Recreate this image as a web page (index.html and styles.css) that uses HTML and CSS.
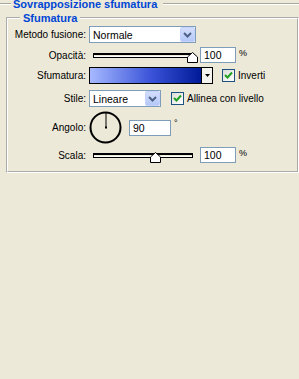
FILE: index.html
```html
<!DOCTYPE html>
<html lang="it">
<head>
  <meta charset="UTF-8">
  <title>Sovrapposizione sfumatura</title>
  <link rel="stylesheet" href="styles.css">
</head>
<body>

<!-- Section title -->
<div class="title-row">
  <span class="etch lead"></span>
  <span class="title">Sovrapposizione sfumatura</span>
  <span class="etch fill"></span>
</div>

<fieldset class="group">
  <legend>Sfumatura</legend>

  <!-- Blend mode -->
  <div class="row row-blend">
    <span class="lbl">Metodo fusione:</span>
    <div class="select sel-blend">
      <span class="sel-text">Normale</span>
      <span class="sel-btn">
        <svg width="9" height="6" viewBox="0 0 9 6"><path d="M1 1 L4.5 4.5 L8 1" fill="none" stroke="#4D6185" stroke-width="2"/></svg>
      </span>
    </div>
  </div>

  <!-- Opacity -->
  <div class="row row-opacity">
    <span class="lbl">Opacità:</span>
    <div class="slider">
      <div class="track"></div>
      <svg class="thumb thumb-end" width="11" height="11" viewBox="0 0 11 11"><path d="M0.5 10.5 V5 L5.5 0.5 L10.5 5 V10.5 Z" fill="#fff" stroke="#000"/></svg>
    </div>
    <div class="num">100</div>
    <span class="unit">%</span>
  </div>

  <!-- Gradient -->
  <div class="row row-grad">
    <span class="lbl">Sfumatura:</span>
    <div class="grad">
      <div class="grad-fill"></div>
      <div class="grad-btn">
        <svg width="5" height="3" viewBox="0 0 5 3"><path d="M0 0 H5 L2.5 3 Z" fill="#000"/></svg>
      </div>
    </div>
    <span class="check chk-invert">
      <svg width="9" height="9" viewBox="0 0 9 9"><path d="M1 4 L3.5 6.5 L8 1.5" fill="none" stroke="#21A121" stroke-width="2"/></svg>
    </span>
    <span class="chk-label">Inverti</span>
  </div>

  <!-- Style -->
  <div class="row row-style">
    <span class="lbl">Stile:</span>
    <div class="select sel-style">
      <span class="sel-text">Lineare</span>
      <span class="sel-btn">
        <svg width="9" height="6" viewBox="0 0 9 6"><path d="M1 1 L4.5 4.5 L8 1" fill="none" stroke="#4D6185" stroke-width="2"/></svg>
      </span>
    </div>
    <span class="check chk-align">
      <svg width="9" height="9" viewBox="0 0 9 9"><path d="M1 4 L3.5 6.5 L8 1.5" fill="none" stroke="#21A121" stroke-width="2"/></svg>
    </span>
    <span class="chk-label">Allinea con livello</span>
  </div>

  <!-- Angle -->
  <div class="row row-angle">
    <span class="lbl">Angolo:</span>
    <svg class="dial" width="33" height="33" viewBox="0 0 33 33">
      <circle cx="16.5" cy="16.5" r="15" fill="none" stroke="#000" stroke-width="2"/>
      <line x1="17" y1="16.5" x2="17" y2="2" stroke="#000" stroke-width="1"/>
      <rect x="16" y="15.5" width="2" height="2" fill="#000"/>
    </svg>
    <div class="num num-angle">90</div>
    <span class="deg">°</span>
  </div>

  <!-- Scale -->
  <div class="row row-scale">
    <span class="lbl">Scala:</span>
    <div class="slider">
      <div class="track"></div>
      <svg class="thumb thumb-mid" width="11" height="11" viewBox="0 0 11 11"><path d="M0.5 10.5 V5 L5.5 0.5 L10.5 5 V10.5 Z" fill="#fff" stroke="#000"/></svg>
    </div>
    <div class="num">100</div>
    <span class="unit">%</span>
  </div>
</fieldset>

</body>
</html>
```

FILE: styles.css
```css
html, body {
  margin: 0;
  padding: 0;
  width: 299px;
  height: 379px;
  overflow: hidden;
  background-color: #ECE9D8;
  font-family: "Liberation Sans", Arial, sans-serif;
  font-size: 10px;
  color: #000;
}

/* title bar with etched rule */
.title-row {
  display: flex;
  align-items: center;
  height: 8px;
}

.etch {
  height: 0;
  border-top: 1px solid #ACA899;
  border-bottom: 1px solid #fff;
}

.etch.lead {
  width: 11px;
}

.etch.fill {
  flex: 1;
}

.title {
  font-size: 11px;
  font-weight: bold;
  line-height: 12px;
  color: #0046D5;
  padding: 0 6px 0 2px;
  white-space: nowrap;
}

/* group box */
.group {
  margin: 3px 0 0 6px;
  padding: 0 0 8px 0;
  border: 2px groove #fff;
  min-width: 0;
}

.group legend {
  margin-left: 12px;
  padding: 0 3px;
  font-size: 11px;
  font-weight: bold;
  line-height: 14px;
  color: #0046D5;
}

.row {
  display: flex;
  align-items: center;
}

.lbl {
  width: 78px;
  margin-right: 3px;
  text-align: right;
  white-space: nowrap;
}

.row-blend { margin-top: 1px; height: 17px; }
.row-opacity { margin-top: 4px; height: 16px; }
.row-grad { margin-top: 4px; height: 17px; }
.row-style { margin-top: 6px; height: 17px; }
.row-angle { margin-top: 4px; height: 33px; }
.row-scale { margin-top: 3px; height: 16px; }

/* combo boxes */
.select {
  display: flex;
  align-items: center;
  box-sizing: border-box;
  height: 17px;
  border: 1px solid #7F9DB9;
  background: #fff;
}

.sel-blend { width: 107px; }
.sel-style { width: 72px; }

.sel-text {
  padding-left: 3px;
  font-size: 10.5px;
}

.sel-btn {
  margin-left: auto;
  box-sizing: border-box;
  width: 15px;
  height: 15px;
  display: flex;
  align-items: center;
  justify-content: center;
  background: linear-gradient(#D3DEFD, #B5C8F7);
  border: 1px solid #C3D3FD;
  border-radius: 2px;
}

/* sliders */
.slider {
  position: relative;
  width: 100px;
  margin-left: 4px;
  height: 16px;
  display: flex;
  align-items: center;
}

.track {
  box-sizing: border-box;
  width: 100px;
  height: 5px;
  border: 1px solid #000;
  border-top-width: 2px;
  background: #ECE9D8;
  box-shadow: inset 0 -1px 0 #fff;
}

.thumb {
  position: absolute;
  top: 5px;
}

.thumb-end { left: 94px; }
.thumb-mid { left: 57px; }

/* numeric fields */
.num {
  box-sizing: border-box;
  width: 36px;
  height: 16px;
  margin-left: 7px;
  padding-left: 3px;
  border: 1px solid #7F9DB9;
  background: #fff;
  line-height: 14px;
  font-size: 10.5px;
}

.num-angle {
  width: 42px;
}

.unit {
  margin-left: 3px;
  align-self: flex-start;
  font-size: 9px;
  line-height: 12px;
}

.deg {
  margin-left: 3px;
  align-self: flex-start;
  margin-top: 7px;
  font-size: 9px;
}

/* gradient swatch */
.grad {
  display: flex;
  box-sizing: border-box;
  width: 124px;
  height: 17px;
  border: 1px solid #000;
}

.grad-fill {
  flex: 1;
  background: linear-gradient(90deg, #A6B9FF, #3A53D8 55%, #001A98);
}

.grad-btn {
  width: 10px;
  border-left: 1px solid #000;
  background: #F4F3EE;
  display: flex;
  align-items: center;
  justify-content: center;
}

/* checkboxes */
.check {
  box-sizing: border-box;
  width: 13px;
  height: 13px;
  border: 1px solid #1C5180;
  background: linear-gradient(135deg, #DCDCD7, #fff);
  display: flex;
  align-items: center;
  justify-content: center;
}

.chk-invert { margin-left: 9px; }
.chk-align { margin-left: 10px; }

.chk-label {
  margin-left: 3px;
  white-space: nowrap;
}

.dial {
  margin-left: 0;
}
```
